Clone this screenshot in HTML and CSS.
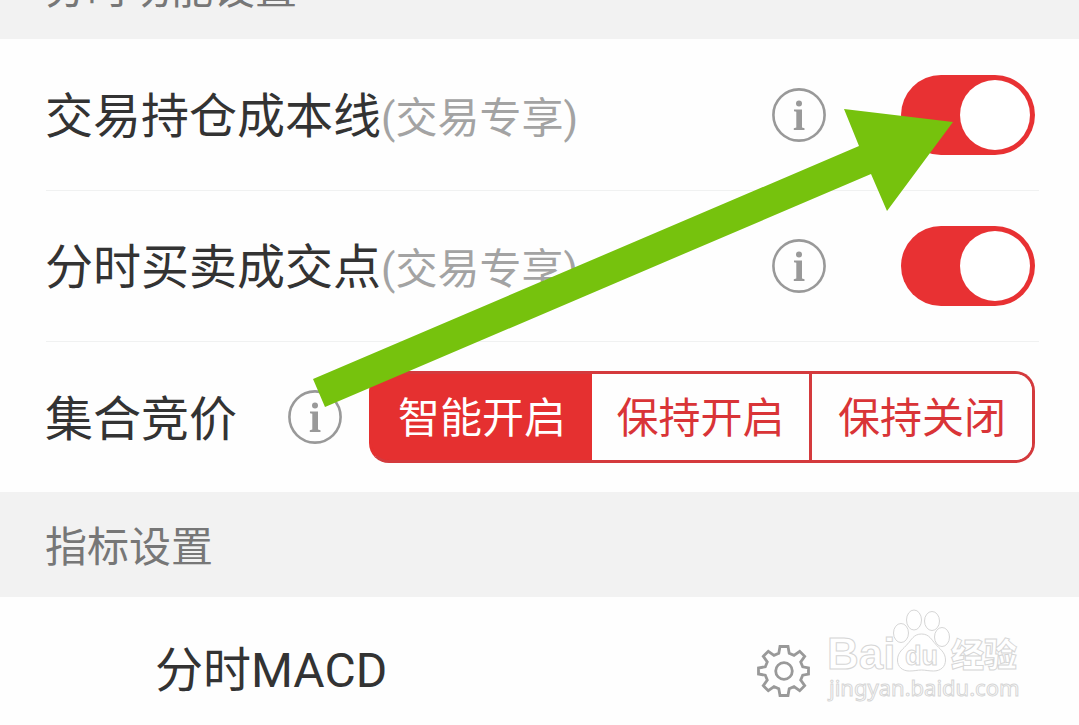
FILE: index.html
```html
<!DOCTYPE html>
<html lang="zh-CN">
<head>
<meta charset="utf-8">
<meta name="viewport" content="width=device-width, initial-scale=1">
<title>分时功能设置</title>
<link rel="stylesheet" href="styles.css">
</head>
<body>
<svg class="symbols" aria-hidden="true">
  <symbol id="info" viewBox="0 0 54 54">
    <circle cx="27" cy="27" r="25.6" fill="none" stroke="currentColor" stroke-width="2.6"/>
    <circle cx="27" cy="15.4" r="3" fill="currentColor"/>
    <path d="M22 21.500h8V39.500l2.500 .8v1.700H21.800v-1.700l2.500-.8V23.800l-2.300-.6z" fill="currentColor"/>
  </symbol>
</svg>
<main class="page">
  <h2 class="section section-first">分时功能设置</h2>
  <div class="row">
    <label class="title" for="cost">交易持仓成本线<span class="note">(交易专享)</span></label>
    <button class="info" type="button" aria-label="说明"><svg><use href="#info"/></svg></button>
    <input class="switch" id="cost" type="checkbox" role="switch" checked>
  </div>
  <div class="row">
    <label class="title" for="deal">分时买卖成交点<span class="note">(交易专享)</span></label>
    <button class="info" type="button" aria-label="说明"><svg><use href="#info"/></svg></button>
    <input class="switch" id="deal" type="checkbox" role="switch" checked>
  </div>
  <div class="row row-choice">
    <span class="title" id="auction">集合竞价</span>
    <button class="info" type="button" aria-label="说明"><svg><use href="#info"/></svg></button>
    <div class="segments" role="radiogroup" aria-labelledby="auction">
      <label class="segment"><input type="radio" name="auction" checked><span>智能开启</span></label>
      <label class="segment"><input type="radio" name="auction"><span>保持开启</span></label>
      <label class="segment"><input type="radio" name="auction"><span>保持关闭</span></label>
    </div>
  </div>
  <h2 class="section">指标设置</h2>
  <div class="row row-indicator">
    <span class="title">分时MACD</span>
    <button class="gear" type="button" aria-label="设置">
      <svg viewBox="0 0 54 54" fill="none" stroke="currentColor" stroke-width="2.8">
        <path d="M23 2.500h8l1.200 6.800 4.800 2 5.700-4 5 5-4 5.700 2 4.800 5.800 1.200v6l-5.800 1.200-2 4.800 4 5.700-5 5-5.700-4-4.800 2-1.200 6.800h-8l-1.200-6.800-4.800-2-5.700 4-5-5 4-5.700-2-4.800L1.500 30v-6l6.800-1.200 2-4.800-4-5.700 5-5 5.700 4 4.800-2z"/>
        <circle cx="27" cy="27" r="8.300"/>
      </svg>
    </button>
  </div>
  <svg class="arrow" viewBox="0 0 640 298" aria-hidden="true"><path d="M0 270 546 37 531 0 640 13 574 102 558 65 12 298z" fill="#76c20d"/></svg>
  <svg class="watermark" viewBox="0 0 200 98" aria-hidden="true">
    <g fill="#fff" stroke="#d6d6d6" stroke-width="1">
      <text class="mark-name" x="1" y="63">Bai</text>
      <ellipse cx="75" cy="27" rx="7.500" ry="9.500"/>
      <ellipse cx="88" cy="14" rx="7.500" ry="10"/>
      <ellipse cx="106" cy="15" rx="7.500" ry="9.500"/>
      <ellipse cx="116" cy="31" rx="7.500" ry="9.500"/>
      <path d="M95.500 28c8 0 10 6 14 10 4 5 10 8 10 16 0 7-5 11-12 11-5 0-8-1-12-1s-7 1-12 1c-7 0-12-4-12-11 0-8 6-11 10-16 4-4 6-10 14-10z"/>
      <text class="mark-du" x="79" y="59">du</text>
      <text class="mark-cjk" x="125" y="61">经验</text>
      <text class="mark-url" x="3" y="90">jingyan.baidu.com</text>
    </g>
  </svg>
</main>
</body>
</html>
```
FILE: styles.css
```css
* { box-sizing: border-box; }

body {
  margin: 0;
  background: #fefefe;
  color: #333;
  font-family: Roboto, "Noto Sans CJK SC", sans-serif;
}

button {
  padding: 0;
  border: 0;
  background: none;
}

.symbols {
  position: absolute;
  width: 0;
  height: 0;
}

.page {
  position: relative;
  min-height: 100vh;
  overflow: hidden;
}

.section {
  display: flex;
  align-items: center;
  height: 105px;
  margin: 0;
  padding: 6px 45px 0;
  background: #f2f2f2;
  color: #777;
  font-size: 42px;
  font-weight: 400;
  line-height: 56px;
}

.section-first { margin-top: -66px; }

.row {
  position: relative;
  display: flex;
  align-items: center;
  height: 151px;
  padding: 0 44px 0 45px;
}

.row + .row::before {
  content: "";
  position: absolute;
  top: 0;
  right: 40px;
  left: 46px;
  border-top: 1px solid #f0f1f1;
}

.title {
  flex: 1;
  padding-top: 6px;
  font-size: 48px;
  line-height: 64px;
  white-space: nowrap;
}

.note {
  color: #a3a3a3;
  font-size: 42px;
}

.info {
  flex: none;
  width: 54px;
  height: 54px;
  margin-right: 75px;
  color: #999;
}

.info svg, .gear svg {
  display: block;
  width: 100%;
  height: 100%;
}

.switch {
  appearance: none;
  display: flex;
  flex: none;
  align-items: center;
  width: 134px;
  height: 80px;
  margin: 0;
  padding: 0 5px;
  border-radius: 40px;
  background: #ccc;
}

.switch::before {
  content: "";
  width: 70px;
  height: 70px;
  border-radius: 50%;
  background: #fff;
}

.switch:checked {
  justify-content: flex-end;
  background: #e83133;
}

.row-choice .title { flex: none; }

.row-choice .info { margin: 0 27px 0 51px; }

.segments {
  display: grid;
  flex: 1;
  grid-template-columns: repeat(3, 1fr);
  height: 92px;
  overflow: hidden;
  border: 3px solid #d43a3d;
  border-radius: 20px;
}

.segment {
  display: flex;
  position: relative;
}

.segment input {
  appearance: none;
  position: absolute;
  margin: 0;
}

.segment span {
  display: flex;
  flex: 1;
  align-items: center;
  justify-content: center;
  padding-top: 4px;
  color: #d93437;
  font-size: 42px;
  line-height: 56px;
  white-space: nowrap;
}

.segment:nth-child(2) { border-right: 3px solid #d43a3d; }

.segment input:checked + span {
  background: #e53030;
  color: #fff;
}

.segments:has(.segment:first-child input:checked) {
  background: linear-gradient(to right, #e53030 30%, transparent 30%);
  border-left-color: #e53030;
}

.segment input:not(:checked) + span { background: #fefefe; }

.row-indicator {
  height: 148px;
  padding-left: 155px;
}

.row-indicator .title { padding-top: 0; }

.gear {
  flex: none;
  width: 54px;
  height: 54px;
  margin-right: 224px;
  color: #999;
}

.arrow {
  position: absolute;
  top: 109px;
  left: 313px;
  width: 640px;
  height: 298px;
  pointer-events: none;
}

.watermark {
  position: absolute;
  top: 606px;
  right: 53px;
  width: 200px;
  height: 98px;
  overflow: visible;
  pointer-events: none;
}

.mark-name {
  font: 700 44px "Liberation Sans", sans-serif;
}

.mark-du {
  font: 700 27px "Liberation Sans", sans-serif;
}

.mark-cjk {
  font: 900 33px "Noto Sans CJK SC", sans-serif;
}

.mark-url {
  font: 400 22px "Noto Sans", sans-serif;
}
```
